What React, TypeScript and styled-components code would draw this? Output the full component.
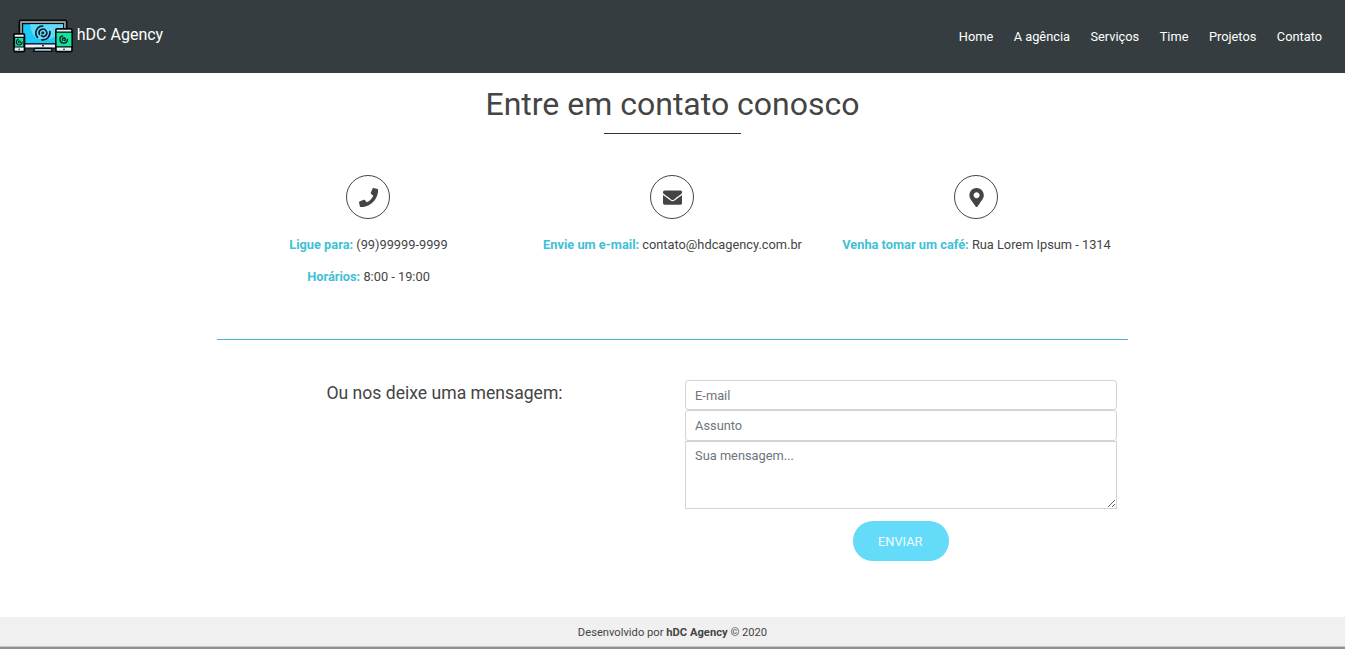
import React from "react";
import styled, { createGlobalStyle } from "styled-components";
import { FaPhone, FaEnvelope, FaMapMarkerAlt } from "react-icons/fa";

const GlobalStyle = createGlobalStyle`
  *, *::before, *::after { box-sizing: border-box; }
  body {
    margin: 0;
    background: #fff;
    color: #444;
    font: 400 12.8px/1.5 Roboto, "Liberation Sans", sans-serif;
  }
`;

const Page = styled.div`
  display: flex;
  flex-direction: column;
  height: 649px;
  overflow: hidden;
`;

const Header = styled.header`
  display: flex;
  justify-content: space-between;
  align-items: center;
  flex: none;
  height: 73px;
  padding: 0 23px 0 12.8px;
  background: #363d40;
`;

const Brand = styled.a`
  display: flex;
  align-items: center;
  gap: 4px;
  color: #fff;
  font-size: 16px;
  line-height: 24px;
  padding-bottom: 3px;
`;

const BrandLogo = styled.svg`
  display: block;
  width: 60px;
  height: 34px;
  margin-top: 2px;
`;

const Nav = styled.nav`
  display: flex;
  gap: 20.48px;
`;

const NavLink = styled.a`
  color: #fff;
`;

const Main = styled.main`
  display: flex;
  flex-direction: column;
  align-items: center;
  flex: 1;
`;

const Title = styled.h1`
  display: flex;
  flex-direction: column;
  align-items: center;
  margin: 12px 0 0;
  font-size: 32px;
  font-weight: 400;
  line-height: 38px;

  &::after {
    content: "";
    width: 137px;
    height: 1px;
    margin-top: 10px;
    background: #333;
  }
`;

const Contacts = styled.section`
  display: grid;
  grid-template-columns: repeat(3, 304px);
  height: 164px;
  margin-top: 41px;
`;

const Contact = styled.div`
  display: flex;
  flex-direction: column;
  align-items: center;
`;

const IconRing = styled.div`
  display: flex;
  align-items: center;
  justify-content: center;
  width: 44px;
  height: 44px;
  margin: 0 1px 16px 0;
  padding: 1px 0 0 1px;
  border: 1px solid #444;
  border-radius: 50%;
  font-size: 19.2px;
`;

const ContactLine = styled.p`
  margin: 0 0 12.8px;
  white-space: nowrap;
`;

const Label = styled.span`
  color: #3fc1d5;
  font-weight: 700;
`;

const MessageArea = styled.section`
  display: grid;
  grid-template-columns: 1fr 1fr;
  width: 911px;
  padding-top: 40px;
  border-top: 1px solid #46b8cf;
`;

const Prompt = styled.h2`
  margin: 0;
  padding-right: 0.5px;
  font-size: 17.6px;
  font-weight: 400;
  line-height: 26px;
  text-align: center;
`;

const Form = styled.form`
  display: flex;
  flex-direction: column;
  align-items: center;
  padding: 0 11px 0 12px;
`;

const Field = styled.input`
  width: 100%;
  height: 30.4px;
  padding: 0 9.6px;
  border: 1px solid #ced4da;
  border-radius: 3.2px;
  background: #fff;
  font: inherit;
  &::placeholder { color: #6c757d; opacity: 1; }
`;

const Message = styled.textarea`
  display: block;
  width: 100%;
  height: 68px;
  padding: 4px 9.6px;
  border: 1px solid #ced4da;
  border-radius: 0;
  background: #fff;
  font: inherit;
  resize: vertical;
  &::placeholder { color: #6c757d; opacity: 1; }
`;

const SendButton = styled.button`
  width: 96px;
  height: 40px;
  margin-top: 12px;
  padding: 2px 1px 0 0;
  border: 0;
  border-radius: 20px;
  background: #63dbf9;
  color: #f4fdff;
  font: inherit;
`;

const Footer = styled.footer`
  flex: none;
  height: 32px;
  border-bottom: 2px solid #8f8f8f;
  background: #f0f0f0;
  box-shadow: inset 0 -1px #c9c9c9;
  font-size: 11.2px;
  line-height: 31px;
  text-align: center;
`;

const Swirl = ({ x, y, scale, weight }: { x: number; y: number; scale: number; weight: number }) => (
  <g
    transform={`translate(${x} ${y}) scale(${scale})`}
    fill="none"
    stroke="#071d29"
    strokeWidth={weight}
    strokeLinecap="round"
  >
    <path d="M0-7.3A7.3 7.3 0 0 0-5.6 4.7" />
    <path d="M7.4-1.5A7.5 7.5 0 0 1-1 7.3" />
    <path d="M-3.6 1.5A4 4 0 1 1 2.6 3.2C1.2 4.4-.7 3.8-1.4 2.8" />
    <circle cx="0" cy="0" r="0.7" fill="#071d29" />
  </g>
);

const SmallSwirl = ({ x, y, scale }: { x: number; y: number; scale: number }) => (
  <g
    transform={`translate(${x} ${y}) scale(${scale})`}
    fill="none"
    stroke="#071d29"
    strokeWidth="1.4"
    strokeLinecap="round"
  >
    <path d="M-1-3.6A3.7 3.7 0 1 0 3.8 0" />
    <path d="M-.8.7A1.4 1.4 0 1 1 .9 1.1" />
  </g>
);

const Logo = () => (
  <BrandLogo viewBox="0 0 60 34" aria-hidden="true">
    <path d="M6.3 28V3Q6.3 1.2 8 1.2H52Q53.7 1.2 53.7 3V28Z" fill="#8f979b" stroke="#050708" strokeWidth="1.6" />
    <path d="M9.6 4.6H50.4V25H9.6Z" fill="#1ccafa" stroke="#050708" strokeWidth="1.2" />
    <path d="M17 5.2H50V14L37 20H24Q18 15 17 5.2Z" fill="#62d9f8" />
    <path d="M10 24.8H46V29H10Z" fill="#eef0ff" stroke="#050708" strokeWidth="1.2" />
    <path d="M22 29.3H38L39.5 32.3H20.5Z" fill="#a9cddd" stroke="#050708" strokeWidth="1.2" />
    <circle cx="30" cy="26.7" r="0.9" fill="#050708" />
    <Swirl x={29.8} y={13.9} scale={0.95} weight={1.7} />
    <rect x="0.9" y="14.9" width="10.6" height="17.8" rx="1.2" fill="#eef0ff" stroke="#050708" strokeWidth="1.7" />
    <path d="M1.5 18.3H10.9V28H1.5Z" fill="#13e49b" stroke="#050708" strokeWidth="1.2" />
    <SmallSwirl x={6.2} y={23.1} scale={0.78} />
    <circle cx="6.2" cy="30.3" r="0.7" fill="#050708" />
    <rect x="42.9" y="9.8" width="16.1" height="22.9" rx="1.2" fill="#eef0ff" stroke="#050708" strokeWidth="1.7" />
    <path d="M43 13.2H59V27.8H43Z" fill="#13e49b" stroke="#050708" strokeWidth="1.2" />
    <SmallSwirl x={50.6} y={20.5} scale={1} />
    <circle cx="51" cy="30.2" r="0.8" fill="#050708" />
  </BrandLogo>
);

const links = ["Home", "A agência", "Serviços", "Time", "Projetos", "Contato"];

export default function App() {
  return (
    <>
      <GlobalStyle />
      <Page>
        <Header>
          <Brand><Logo />hDC Agency</Brand>
          <Nav>{links.map((link) => <NavLink key={link}>{link}</NavLink>)}</Nav>
        </Header>
        <Main>
          <Title>Entre em contato conosco</Title>
          <Contacts>
            <Contact>
              <IconRing><FaPhone /></IconRing>
              <ContactLine><Label>Ligue para:</Label> (99)99999-9999</ContactLine>
              <ContactLine><Label>Horários:</Label> 8:00 - 19:00</ContactLine>
            </Contact>
            <Contact>
              <IconRing><FaEnvelope /></IconRing>
              <ContactLine><Label>Envie um e-mail:</Label> contato@hdcagency.com.br</ContactLine>
            </Contact>
            <Contact>
              <IconRing><FaMapMarkerAlt /></IconRing>
              <ContactLine><Label>Venha tomar um café:</Label> Rua Lorem Ipsum - 1314</ContactLine>
            </Contact>
          </Contacts>
          <MessageArea>
            <Prompt>Ou nos deixe uma mensagem:</Prompt>
            <Form>
              <Field type="email" placeholder="E-mail" />
              <Field type="text" placeholder="Assunto" />
              <Message placeholder="Sua mensagem..." />
              <SendButton type="button">ENVIAR</SendButton>
            </Form>
          </MessageArea>
        </Main>
        <Footer>Desenvolvido por <b>hDC Agency</b> © 2020</Footer>
      </Page>
    </>
  );
}
